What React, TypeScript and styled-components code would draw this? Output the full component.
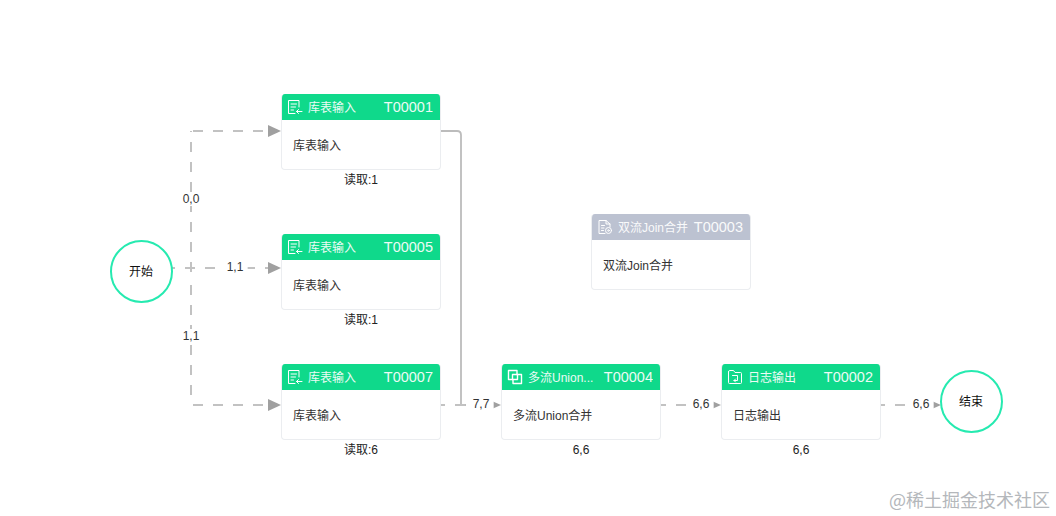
import React from "react";
import styled, { createGlobalStyle } from "styled-components";

const Global = createGlobalStyle`
  html, body { margin: 0; padding: 0; background: #fff; }
  body { font-family: "Liberation Sans", "Noto Sans CJK SC", sans-serif; }
`;

const Canvas = styled.div`
  position: relative;
  width: 1056px;
  height: 516px;
  overflow: hidden;
  background: #fff;
`;

const Edges = styled.svg`
  position: absolute;
  inset: 0;
`;

const NodeSlot = styled.div<{ $x: number; $y: number }>`
  position: absolute;
  left: ${(p) => p.$x}px;
  top: ${(p) => p.$y}px;
  width: 160px;
  display: flex;
  flex-direction: column;
  align-items: center;
`;

const Card = styled.div`
  width: 100%;
  height: 76px;
  box-sizing: border-box;
  display: flex;
  flex-direction: column;
  background: #fff;
  border: 1px solid #ebedf0;
  border-top: none;
  border-radius: 4px;
  overflow: hidden;
`;

const Header = styled.div<{ $muted?: boolean }>`
  height: 26px;
  flex: none;
  margin: 0 -1px;
  padding: 0 8px 0 6px;
  display: flex;
  align-items: center;
  color: #fff;
  background: ${(p) => (p.$muted ? "#bcc2d1" : "#0fd98b")};
`;

const IconBox = styled.span`
  width: 16px;
  height: 16px;
  flex: none;
  margin-right: 5px;
  display: block;
  & > svg { display: block; }
`;

const Title = styled.span`
  flex: 1;
  min-width: 0;
  margin-top: 2px;
  font-size: 12px;
  line-height: 24px;
  white-space: nowrap;
  opacity: 0.92;
`;

const Code = styled.span`
  flex: none;
  font-size: 14.5px;
  line-height: 26px;
  opacity: 0.92;
`;

const Body = styled.div`
  flex: 1;
  display: flex;
  align-items: center;
  padding-left: 11px;
  font-size: 12px;
  color: #333;
`;

const Caption = styled.div`
  margin-top: 2px;
  font-size: 12px;
  line-height: 16px;
  color: #222;
`;

const Terminal = styled.div<{ $cx: number; $cy: number }>`
  position: absolute;
  left: ${(p) => p.$cx - 31.5}px;
  top: ${(p) => p.$cy - 31.5}px;
  width: 63px;
  height: 63px;
  box-sizing: border-box;
  padding-bottom: 2px;
  border: 2.5px solid #26eab0;
  border-radius: 50%;
  background: #fff;
  display: flex;
  align-items: center;
  justify-content: center;
  font-size: 12px;
  color: #111;
`;

const EdgeLabel = styled.span<{ $cx: number; $cy: number }>`
  position: absolute;
  left: ${(p) => p.$cx}px;
  top: ${(p) => p.$cy}px;
  transform: translate(-50%, -50%);
  padding: 0 4px;
  background: #fff;
  font-size: 12px;
  line-height: 14px;
  color: #333;
`;

const Watermark = styled.div`
  position: absolute;
  right: 6px;
  bottom: 6px;
  font-family: "Noto Sans CJK SC", sans-serif;
  font-size: 18px;
  line-height: 22px;
  color: #b4b7bb;
  white-space: nowrap;
`;

const stroke = {
  fill: "none",
  stroke: "#fff",
  strokeWidth: 1,
  strokeLinecap: "round" as const,
  strokeLinejoin: "round" as const,
};

const InputIcon = () => (
  <svg width="16" height="16" viewBox="0 0 16 16" {...stroke}>
    <path d="M8 14.5H1.5V1.5H12V8" />
    <path d="M4 5H9.5M4 8H8.5M4 11H6.5" />
    <path d="M15 12.5H9.5M11.5 10.5L9.5 12.5L11.5 14.5" />
  </svg>
);

const UnionIcon = () => (
  <svg width="16" height="16" viewBox="0 0 16 16" {...stroke} strokeWidth={1.4}>
    <path d="M1.5 1.5H10V5.5H14.5V14.5H6V10.5H1.5Z" />
    <path d="M5.5 5.5H10.5V10.5H5.5Z" />
  </svg>
);

const OutputIcon = () => (
  <svg width="16" height="16" viewBox="0 0 16 16" {...stroke}>
    <path d="M1.5 3V13.5Q1.5 14.5 2.5 14.5H13.5Q14.5 14.5 14.5 13.5V4.5Q14.5 3.5 13.5 3.5H8L6.5 1.5H2.5Q1.5 1.5 1.5 3Z" />
    <path d="M5.5 6.5H10.5V11.5H7M8.5 10L7 11.5L8.5 13" />
  </svg>
);

const JoinIcon = () => (
  <svg width="16" height="16" viewBox="0 0 16 16" {...stroke}>
    <path d="M8 14.5H2V1.5H9L13 5V8" />
    <path d="M9 1.5V5H13" />
    <path d="M4.5 6.5H7.5M4.5 9H7M4.5 11.5H6.5" />
    <circle cx="11.5" cy="11.5" r="3" />
    <circle cx="11.5" cy="11.5" r="0.8" />
  </svg>
);

type NodeData = {
  x: number;
  y: number;
  title: string;
  code: string;
  body: string;
  caption?: string;
  icon: React.ReactNode;
  muted?: boolean;
};

const nodes: NodeData[] = [
  { x: 281, y: 94, title: "库表输入", code: "T00001", body: "库表输入", caption: "读取:1", icon: <InputIcon /> },
  { x: 281, y: 234, title: "库表输入", code: "T00005", body: "库表输入", caption: "读取:1", icon: <InputIcon /> },
  { x: 281, y: 364, title: "库表输入", code: "T00007", body: "库表输入", caption: "读取:6", icon: <InputIcon /> },
  { x: 501, y: 364, title: "多流Union...", code: "T00004", body: "多流Union合并", caption: "6,6", icon: <UnionIcon /> },
  { x: 721, y: 364, title: "日志输出", code: "T00002", body: "日志输出", caption: "6,6", icon: <OutputIcon /> },
  { x: 591, y: 214, title: "双流Join合并", code: "T00003", body: "双流Join合并", icon: <JoinIcon />, muted: true },
];

const labels = [
  { x: 191, y: 199, text: "0,0" },
  { x: 235, y: 267, text: "1,1" },
  { x: 191, y: 336, text: "1,1" },
  { x: 481, y: 404, text: "7,7" },
  { x: 701, y: 404, text: "6,6" },
  { x: 921, y: 404, text: "6,6" },
];

const DASH = { fill: "none", stroke: "#c2c2c2", strokeWidth: 2, strokeDasharray: "10 10" };

const Arrow = ({ tip, y, big }: { tip: number; y: number; big?: boolean }) => {
  const w = big ? 13 : 8;
  const h = big ? 6 : 3.5;
  return <polygon points={`${tip},${y} ${tip - w},${y - h} ${tip - w},${y + h}`} fill="#a0a0a0" />;
};

export default function App() {
  return (
    <Canvas>
      <Global />
      <Edges width="1056" height="516" viewBox="0 0 1056 516">
        <path d="M191 272V131" {...DASH} />
        <path d="M191 285V405" {...DASH} />
        <path d="M193 131H268" {...DASH} />
        <path d="M193 405H268" {...DASH} />
        <path d="M172 268H268" {...DASH} strokeDashoffset="7" />
        <path d="M441 131H457Q461 131 461 135V405H466" fill="none" stroke="#bcbcbc" strokeWidth="1.8" />
        <path d="M441 405H466" {...DASH} strokeDashoffset="6" />
        <path d="M661 405H713" {...DASH} strokeDashoffset="5" />
        <path d="M881 405H933" {...DASH} strokeDashoffset="6" />
        <Arrow tip={281} y={131} big />
        <Arrow tip={281} y={268} big />
        <Arrow tip={281} y={405} big />
        <Arrow tip={501} y={405} />
        <Arrow tip={721} y={405} />
        <Arrow tip={941} y={405} />
      </Edges>

      {labels.map((l, i) => (
        <EdgeLabel key={i} $cx={l.x} $cy={l.y}>
          {l.text}
        </EdgeLabel>
      ))}

      <Terminal $cx={141} $cy={271}>开始</Terminal>
      <Terminal $cx={971} $cy={401}>结束</Terminal>

      {nodes.map((n) => (
        <NodeSlot key={n.code} $x={n.x} $y={n.y}>
          <Card>
            <Header $muted={n.muted}>
              <IconBox>{n.icon}</IconBox>
              <Title>{n.title}</Title>
              <Code>{n.code}</Code>
            </Header>
            <Body>{n.body}</Body>
          </Card>
          {n.caption && <Caption>{n.caption}</Caption>}
        </NodeSlot>
      ))}

      <Watermark>@稀土掘金技术社区</Watermark>
    </Canvas>
  );
}
